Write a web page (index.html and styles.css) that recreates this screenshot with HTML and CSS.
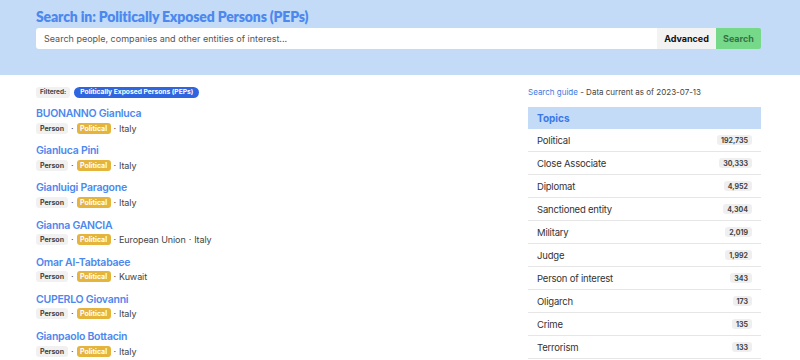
FILE: index.html
```html
<!DOCTYPE html>
<html lang="en">
<head>
<meta charset="utf-8">
<title>Search in: Politically Exposed Persons (PEPs)</title>
<link rel="stylesheet" href="styles.css">
</head>
<body>
<header class="hero">
  <div class="wrap">
    <h1 class="hero-title">Search in: Politically Exposed Persons (PEPs)</h1>
    <form class="search">
      <input class="search-input" type="text" placeholder="Search people, companies and other entities of interest...">
      <button class="btn btn-adv" type="button">Advanced</button>
      <button class="btn btn-go" type="button">Search</button>
    </form>
  </div>
</header>
<main class="wrap content">
  <section class="results">
    <div class="filters"><span class="tag tag-grey">Filtered:</span><span class="tag tag-blue">Politically Exposed Persons (PEPs)</span></div>
    <div class="result"><a class="name">BUONANNO Gianluca</a><div class="meta"><span class="tag tag-grey">Person</span><span class="dot">·</span><span class="tag tag-yellow">Political</span><span class="dot">·</span>Italy</div></div>
    <div class="result"><a class="name">Gianluca Pini</a><div class="meta"><span class="tag tag-grey">Person</span><span class="dot">·</span><span class="tag tag-yellow">Political</span><span class="dot">·</span>Italy</div></div>
    <div class="result"><a class="name">Gianluigi Paragone</a><div class="meta"><span class="tag tag-grey">Person</span><span class="dot">·</span><span class="tag tag-yellow">Political</span><span class="dot">·</span>Italy</div></div>
    <div class="result"><a class="name">Gianna GANCIA</a><div class="meta"><span class="tag tag-grey">Person</span><span class="dot">·</span><span class="tag tag-yellow">Political</span><span class="dot">·</span>European Union<span class="dot">·</span>Italy</div></div>
    <div class="result"><a class="name">Omar Al-Tabtabaee</a><div class="meta"><span class="tag tag-grey">Person</span><span class="dot">·</span><span class="tag tag-yellow">Political</span><span class="dot">·</span>Kuwait</div></div>
    <div class="result"><a class="name">CUPERLO Giovanni</a><div class="meta"><span class="tag tag-grey">Person</span><span class="dot">·</span><span class="tag tag-yellow">Political</span><span class="dot">·</span>Italy</div></div>
    <div class="result"><a class="name">Gianpaolo Bottacin</a><div class="meta"><span class="tag tag-grey">Person</span><span class="dot">·</span><span class="tag tag-yellow">Political</span><span class="dot">·</span>Italy</div></div>
  </section>
  <aside class="side">
    <p class="side-note"><a class="link">Search guide</a> - Data current as of 2023-07-13</p>
    <div class="facet">
      <div class="facet-head">Topics</div>
      <ul class="facet-list">
        <li class="facet-item"><span>Political</span><span class="count">192,735</span></li>
        <li class="facet-item"><span>Close Associate</span><span class="count">30,333</span></li>
        <li class="facet-item"><span>Diplomat</span><span class="count">4,952</span></li>
        <li class="facet-item"><span>Sanctioned entity</span><span class="count">4,304</span></li>
        <li class="facet-item"><span>Military</span><span class="count">2,019</span></li>
        <li class="facet-item"><span>Judge</span><span class="count">1,992</span></li>
        <li class="facet-item"><span>Person of interest</span><span class="count">343</span></li>
        <li class="facet-item"><span>Oligarch</span><span class="count">173</span></li>
        <li class="facet-item"><span>Crime</span><span class="count">135</span></li>
        <li class="facet-item"><span>Terrorism</span><span class="count">133</span></li>
      </ul>
    </div>
  </aside>
</main>
</body>
</html>
```
FILE: styles.css
```css
* { box-sizing: border-box; }
html, body { margin: 0; padding: 0; }
body {
  font-family: Inter, "Liberation Sans", sans-serif;
  color: #333;
  background: #fff;
  overflow: hidden;
}
.wrap { padding: 0 39px 0 36px; }

.hero { background: #c3dbf7; height: 75px; padding-top: 8px; }
.hero-title {
  margin: 0;
  font-family: Lato, Inter, sans-serif;
  font-weight: 800;
  font-size: 14px;
  letter-spacing: -0.15px;
  line-height: 18px;
  color: #4c88ee;
}
.search { display: flex; margin-top: 2px; height: 21px; }
.search-input {
  flex: 1;
  border: none;
  border-radius: 3px 0 0 3px;
  padding: 0 8px;
  font-family: Inter, sans-serif;
  font-size: 9px;
  color: #333;
  outline: none;
}
.search-input::placeholder { color: #555; }
.btn {
  border: none;
  font-family: Inter, sans-serif;
  font-weight: 700;
  font-size: 9px;
  padding: 0;
}
.btn-adv { width: 59px; background: #f3f3f3; color: #111; }
.btn-go { width: 45px; background: #76d98a; color: #357244; border-radius: 0 2px 2px 0; }

.content {
  display: grid;
  grid-template-columns: 1fr 233px;
  column-gap: 24px;
  padding-top: 12px;
}
.filters { display: flex; gap: 4px; height: 11px; margin-bottom: 8px; align-items: center; }
.tag {
  display: inline-flex;
  align-items: center;
  height: 11px;
  padding: 0 4px;
  border-radius: 3px;
  font-size: 6.5px;
  font-weight: 700;
  line-height: 1;
}
.tag-grey { background: #f1f1f1; color: #444; }
.tag-blue { background: #2f66e0; color: #fff; border-radius: 6px; padding: 0 6px; font-size: 6.7px; }
.tag-yellow { background: #e5b43d; color: #fff; }

.result { margin-bottom: 8.2px; }
.name {
  display: block;
  font-size: 10.5px;
  letter-spacing: -0.25px;
  font-weight: 600;
  line-height: 15px;
  color: #4c88ee;
}
.meta {
  display: flex;
  align-items: center;
  height: 14px;
  font-size: 9px;
  letter-spacing: -0.1px;
  color: #444;
}
.meta .tag { font-size: 7px; letter-spacing: 0; }
.meta .tag-grey { width: 32px; justify-content: center; padding: 0; }
.meta .tag-yellow { width: 34px; justify-content: center; padding: 0; }
.dot { margin: 0 3px; }

.side-note { margin: 0 0 9px; font-size: 8px; line-height: 11px; color: #444; }
.link { color: #3d7ae0; }
.facet-head {
  background: #c3dbf7;
  height: 22px;
  display: flex;
  align-items: center;
  padding: 0 9px;
  font-size: 10px;
  font-weight: 700;
  color: #3a78e8;
}
.facet-list { list-style: none; margin: 0; padding: 0; }
.facet-item {
  height: 23px;
  border-bottom: 1px solid #e6e6e6;
  display: flex;
  align-items: center;
  justify-content: space-between;
  padding: 0 9px;
  font-size: 9.5px;
  letter-spacing: -0.2px;
  color: #333;
}
.count {
  background: #efefef;
  border-radius: 3px;
  height: 10px;
  padding: 0 4px;
  display: inline-flex;
  align-items: center;
  font-size: 7px;
  letter-spacing: 0;
  font-weight: 700;
  color: #444;
}
```
